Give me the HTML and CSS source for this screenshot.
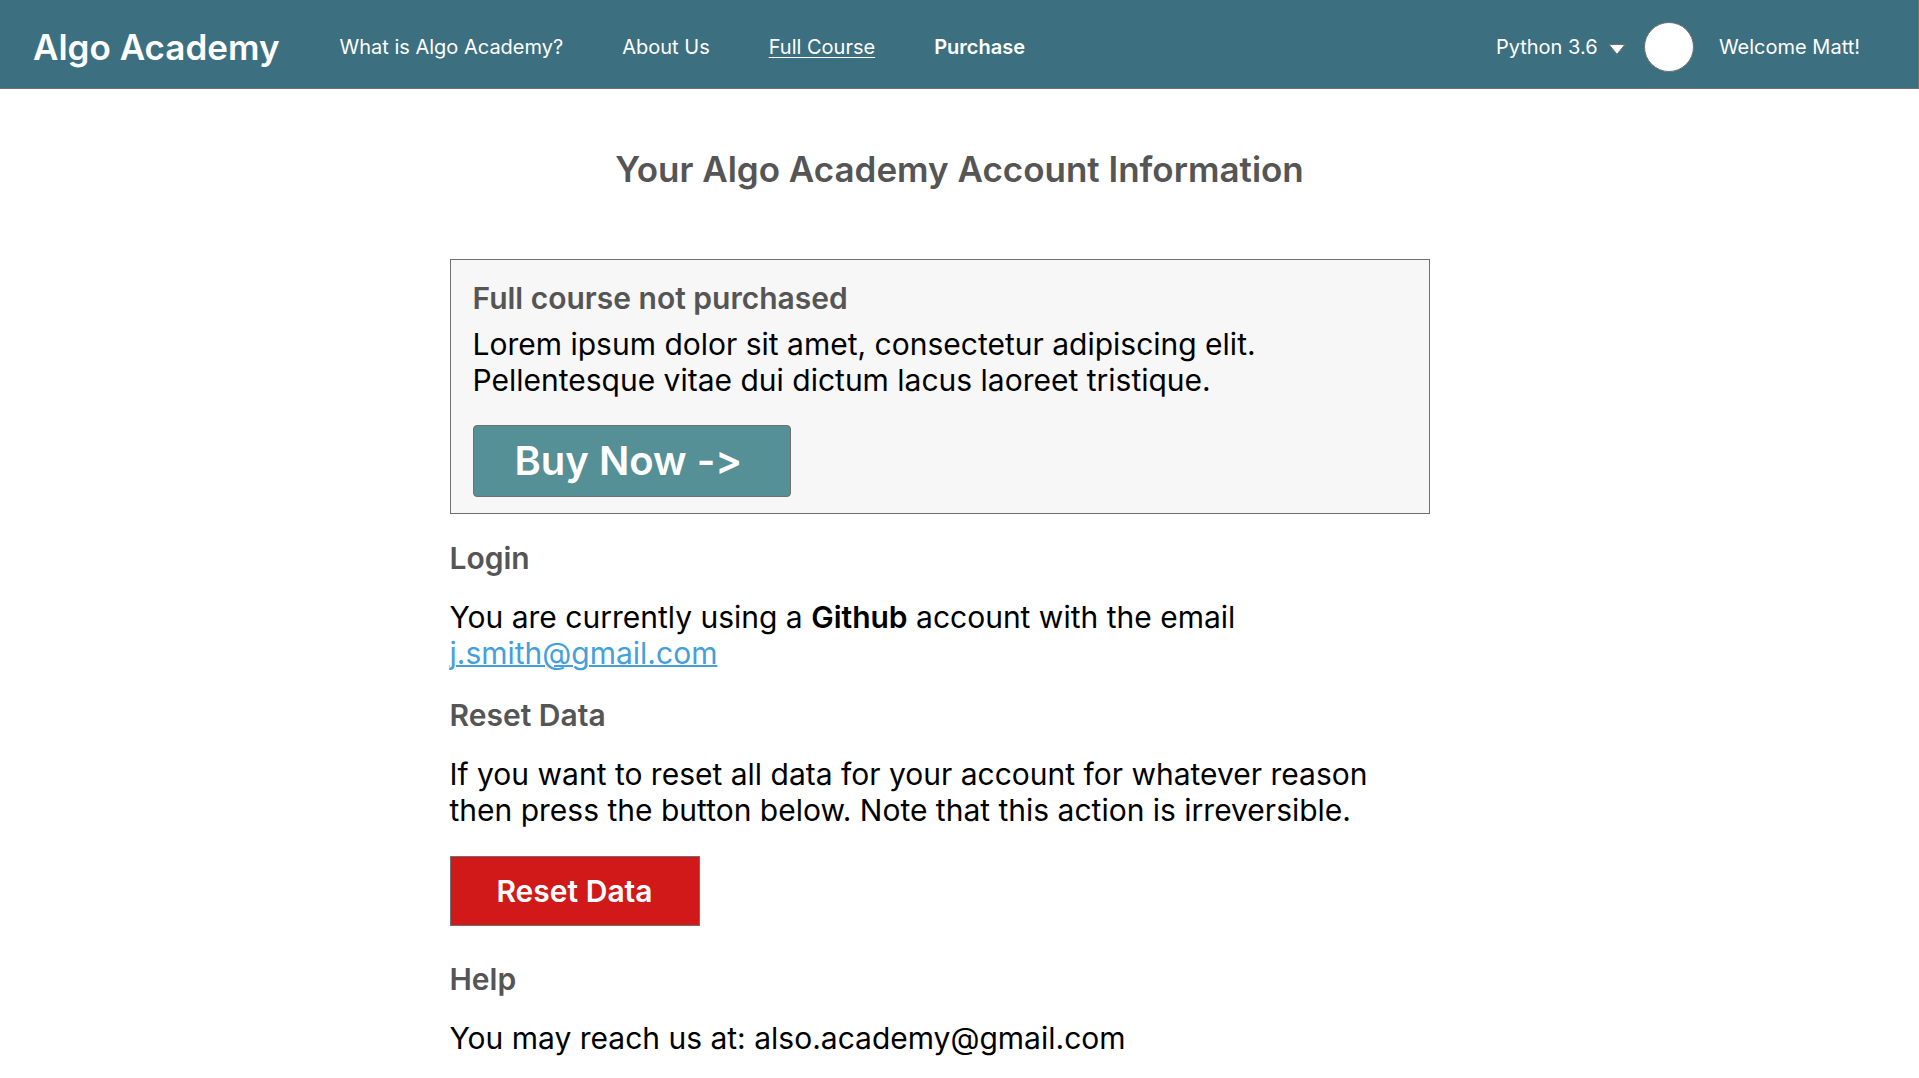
FILE: index.html
```html
<!DOCTYPE html>
<html lang="en">
<head>
<meta charset="utf-8">
<meta name="viewport" content="width=device-width, initial-scale=1">
<title>Algo Academy – Account</title>
<link rel="stylesheet" href="styles.css">
</head>
<body>
<header class="topbar">
  <a class="brand" href="#">Algo Academy</a>
  <nav class="nav">
    <a href="#">What is Algo Academy?</a>
    <a href="#">About Us</a>
    <a class="current" href="#">Full Course</a>
    <a class="strong" href="#">Purchase</a>
  </nav>
  <div class="user">
    <label class="language">
      <select class="language-select" aria-label="Language"><option>Python 3.6</option></select>
      <svg class="caret" viewBox="0 0 18 11" aria-hidden="true"><path d="M1 .5H17L9 10.3Z"/></svg>
    </label>
    <span class="avatar"></span>
    <span>Welcome Matt!</span>
  </div>
</header>
<main class="page">
  <h1 class="title">Your Algo Academy Account Information</h1>
  <div class="content">
    <section class="card">
      <h2>Full course not purchased</h2>
      <p>Lorem ipsum dolor sit amet, consectetur adipiscing elit.<br>Pellentesque vitae dui dictum lacus laoreet tristique.</p>
      <button class="buy" type="button">Buy Now -&gt;</button>
    </section>
    <section class="block">
      <h2>Login</h2>
      <p>You are currently using a <strong>Github</strong> account with the email<br><a class="email" href="mailto:j.smith@gmail.com">j.smith@gmail.com</a></p>
    </section>
    <section class="block">
      <h2>Reset Data</h2>
      <p>If you want to reset all data for your account for whatever reason<br>then press the button below. Note that this action is irreversible.</p>
      <button class="reset" type="button">Reset Data</button>
    </section>
    <section class="block help">
      <h2>Help</h2>
      <p>You may reach us at: also.academy@gmail.com</p>
    </section>
  </div>
</main>
</body>
</html>
```

FILE: styles.css
```css
* { box-sizing: border-box; }

body {
  margin: 0;
  background: #fff;
  color: #000;
  font-family: Inter, "Liberation Sans", sans-serif;
  font-size: 30px;
  line-height: 36px;
  font-variant-ligatures: none;
}

h1, h2, p { margin: 0; }
h1, h2 { color: #555; font-weight: 600; }
h2 { font-size: 30px; line-height: 36px; }
strong { font-weight: 600; }

/* Top bar */
.topbar {
  display: flex;
  align-items: center;
  padding: 22px 58px 16px 33px;
  background: #3c7080;
  border: solid #707070;
  border-width: 0 1px 1px 0;
  color: #fff;
  font-size: 20px;
  line-height: 24px;
}
.topbar a { color: #fff; text-decoration: none; }
.topbar .brand { font-size: 35px; line-height: 42px; font-weight: 600; }
.nav { display: flex; gap: 59px; margin-left: 60px; }
.topbar .current { text-decoration: underline; text-decoration-thickness: 1px; text-underline-offset: 3px; }
.nav .strong { font-weight: 600; }
.user { display: flex; align-items: center; margin-left: auto; }
.language { display: flex; align-items: center; gap: 10px; }
.language-select {
  appearance: none;
  padding: 0;
  border: 0;
  background: none;
  color: #fff;
  font: inherit;
}
.caret { width: 18px; height: 11px; margin-top: 5px; fill: #fff; stroke: #707070; stroke-width: 1; }
.avatar {
  width: 50px;
  height: 50px;
  margin: 0 25px 0 18px;
  border: 1px solid #707070;
  border-radius: 50%;
  background: #fff;
}

/* Account page */
.title { margin-top: 59px; font-size: 35px; line-height: 42px; text-align: center; }
.content { max-width: 1020px; margin: 69px auto 0; padding-right: 40px; }
.card { padding: 20px 22px 16px; border: 1px solid #707070; background: #f7f7f7; }
.card p { margin-top: 10px; }
.block { margin-top: 26px; }
.block p { margin-top: 23px; }
.help { margin-top: 35px; }
.email { color: #459fdb; text-decoration-thickness: 2px; }

button { display: block; border: 1px solid #707070; color: #fff; font: inherit; font-weight: 600; }
.buy {
  width: 318px;
  height: 72px;
  margin-top: 27px;
  padding: 0 41px;
  border-radius: 4px;
  background: #569097;
  font-size: 40px;
  text-align: left;
}
.reset { width: 250px; height: 70px; margin-top: 28px; background: #d11919; }
```
